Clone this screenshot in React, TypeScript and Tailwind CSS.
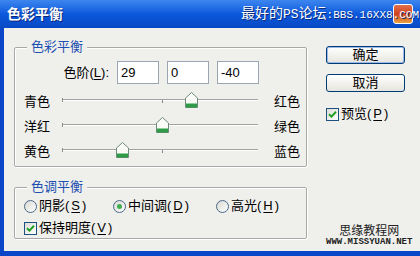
import React from 'react';

const cjk = "font-['Liberation_Sans','Noto_Sans_CJK_SC',sans-serif]";

const Thumb = ({ left }: { left: number }) => (
  <svg className="absolute top-[4px]" style={{ left }} width="13" height="16" viewBox="0 0 13 16">
    <path d="M6.5 0.5 L12.5 6 L12.5 15.5 L0.5 15.5 L0.5 6 Z" fill="#fbfbf8" stroke="#6f8a7a" />
    <rect x="1" y="12" width="11" height="3.5" fill="#2f9a48" />
    <rect x="1" y="11" width="11" height="1" fill="#8fd09c" />
  </svg>
);

// track spans -100..100, one pixel per step
const Slider = ({ value }: { value: number }) => (
  <div className="relative h-[25px] w-[200px]">
    <div className="absolute left-0 right-[4px] top-[11px] h-px bg-[#a2a2a2]" />
    <div className="absolute left-0 right-[4px] top-[12px] h-px bg-white" />
    <div className="absolute left-0 top-[10px] h-[4px] w-px bg-[#8a8a8a]" />
    <div className="absolute left-[100px] top-[12px] h-[3px] w-px bg-[#8a8a8a]" />
    <Thumb left={100 + value - 6} />
  </div>
);

const Check = () => (
  <span className="flex h-[13px] w-[13px] shrink-0 items-center justify-center border border-[#1c5180] bg-gradient-to-br from-[#dcdcd7] to-white">
    <svg width="9" height="9" viewBox="0 0 9 9">
      <path d="M1 4.2 L3.5 6.6 L8 1.8" fill="none" stroke="#21a121" strokeWidth="2" />
    </svg>
  </span>
);

const Radio = ({ on }: { on?: boolean }) => (
  <span className="flex h-[13px] w-[13px] shrink-0 items-center justify-center rounded-full border border-[#4a6a8a] bg-gradient-to-br from-[#d8d8d3] to-white">
    {on && <span className="h-[5px] w-[5px] rounded-full bg-[#3fae4f]" />}
  </span>
);

const U = ({ c }: { c: string }) => <span className="underline underline-offset-2">{c}</span>;

const rows = [
  { l: '青色', r: '红色', v: 29 },
  { l: '洋红', r: '绿色', v: 0 },
  { l: '黄色', r: '蓝色', v: -40 },
];

const groupCls =
  'w-[293px] rounded-[2px] border border-[#a8a8a8] shadow-[inset_1px_1px_0_#fff,1px_1px_0_#fff]';
const legendCls = 'ml-[12px] bg-[#efefec] px-[4px] leading-[16px] text-[#1d4fb0]';

export default function App() {
  return (
    <div className={`h-[256px] w-[420px] overflow-hidden bg-[#efefec] text-[13px] text-black ${cjk}`}>
      {/* title bar */}
      <div className="relative flex h-[28px] items-center justify-between bg-gradient-to-b from-[#3d86ef] via-[#0b58dc] to-[#0849c4] pl-[7px] text-white">
        <span className="text-[14px] font-bold leading-[16px] [text-shadow:1px_1px_0_#0a2a7a]">色彩平衡</span>
        <div className="absolute right-[7px] top-[4px] h-[20px] w-[20px] rounded-[3px] border border-white bg-gradient-to-b from-[#e0704a] via-[#d0401c] to-[#e8a040]" />
        <span className="relative flex items-baseline whitespace-nowrap pr-[1px] leading-[16px] [text-shadow:1px_1px_0_#0a2a7a]">
          <span className="text-[14px]">最好的</span>
          <span className="font-['Liberation_Mono',monospace] text-[13px]">PS</span>
          <span className="text-[14px]">论坛</span>
          <span className="font-['Liberation_Mono',monospace] text-[11px]">:BBS.16XX8.COM</span>
        </span>
      </div>

      {/* body */}
      <div className="flex h-[228px] border-b-[5px] border-l-4 border-[#0b46c8]">
        <div className="flex flex-col pl-[10px] pt-[11px]">
          <fieldset className={`${groupCls} pb-[3px]`}>
            <legend className={legendCls}>色彩平衡</legend>
            <div className="mt-[6px] flex items-center gap-[8px]">
              <span className="w-[94px] text-right leading-[16px]">
                色阶(<U c="L" />):
              </span>
              {['29', '0', '-40'].map((t) => (
                <div
                  key={t}
                  className="flex h-[23px] w-[42px] items-center border border-[#9aa6b0] bg-white pl-[3px] font-['Liberation_Sans',sans-serif]"
                >
                  {t}
                </div>
              ))}
            </div>
            <div className="mt-[4px] flex flex-col">
              {rows.map((r) => (
                <div key={r.l} className="flex h-[25px] items-start">
                  <span className="w-[47px] pl-[9px] pt-[6px] leading-[16px]">{r.l}</span>
                  <Slider value={r.v} />
                  <span className="ml-[12px] pt-[6px] leading-[16px]">{r.r}</span>
                </div>
              ))}
            </div>
          </fieldset>

          <fieldset className={`${groupCls} mt-[12px] pb-[2px]`}>
            <legend className={legendCls}>色调平衡</legend>
            <div className="mt-[3px] flex h-[16px] items-center pl-[9px] leading-[16px]">
              <label className="flex w-[89px] items-center gap-[2px]">
                <Radio />
                阴影(<U c="S" />)
              </label>
              <label className="flex w-[103px] items-center gap-[2px]">
                <Radio on />
                中间调(<U c="D" />)
              </label>
              <label className="flex items-center gap-[2px]">
                <Radio />
                高光(<U c="H" />)
              </label>
            </div>
            <div className="mt-[6px] flex h-[16px] items-center gap-[2px] pl-[9px] leading-[16px]">
              <Check />
              保持明度(<U c="V" />)
            </div>
          </fieldset>
        </div>

        <div className="flex flex-1 flex-col pl-[19px] pr-[11px] pt-[18px]">
          <button className="h-[18px] w-[79px] rounded-[3px] border border-[#003c74] bg-gradient-to-b from-white to-[#e6e5de] leading-[14px] shadow-[inset_0_0_0_1px_#9cb8ec]">
            确定
          </button>
          <button className="mt-[10px] h-[18px] w-[79px] rounded-[3px] border border-[#003c74] bg-gradient-to-b from-white to-[#e6e5de] leading-[14px]">
            取消
          </button>
          <div className="mt-[14px] flex h-[16px] items-center gap-[2px] leading-[16px]">
            <Check />
            预览(<U c="P" />)
          </div>
          <div className="mt-auto flex flex-col items-center pb-[4px]">
            <span className="text-[12px] leading-[14px] text-[#222]">思缘教程网</span>
            <span className="font-['Liberation_Mono',monospace] text-[9px] font-bold leading-[9px] text-[#222]">
              WWW.MISSYUAN.NET
            </span>
          </div>
        </div>
      </div>
    </div>
  );
}
